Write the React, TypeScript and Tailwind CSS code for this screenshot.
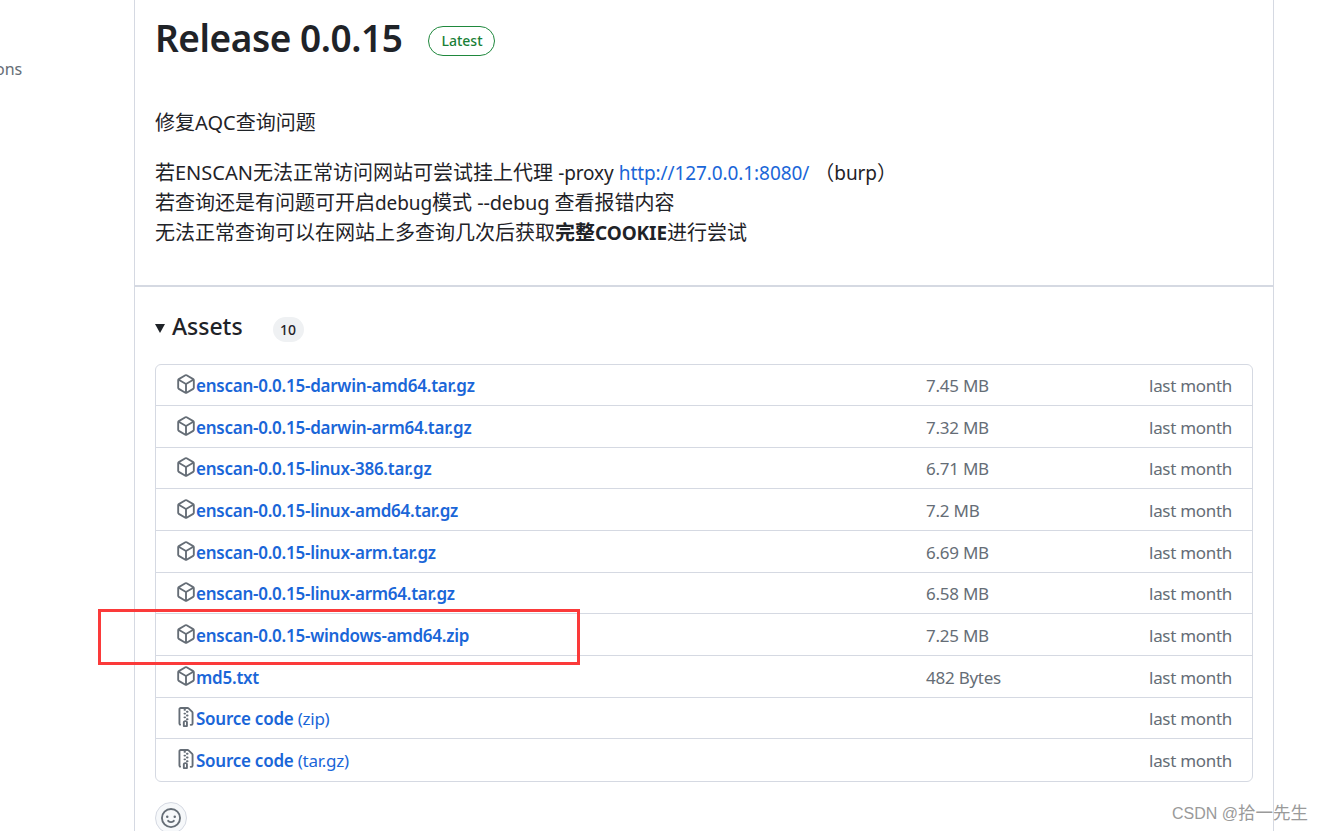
const pkg = "m8.878.392 5.25 3.045c.54.314.872.89.872 1.514v6.098a1.75 1.75 0 0 1-.872 1.514l-5.25 3.045a1.75 1.75 0 0 1-1.756 0l-5.25-3.045A1.75 1.75 0 0 1 1 11.049V4.951c0-.624.332-1.201.872-1.514L7.122.392a1.75 1.75 0 0 1 1.756 0ZM7.875 1.69l-4.63 2.685L8 7.133l4.755-2.758-4.63-2.685a.248.248 0 0 0-.25 0ZM2.5 5.677v5.372c0 .09.047.171.125.216l4.625 2.683V8.432Zm6.25 8.271 4.625-2.683a.25.25 0 0 0 .125-.216V5.677L8.75 8.432Z";
const zip = "M3.5 1.75v11.5c0 .09.048.173.126.217a.75.75 0 0 1-.752 1.298A1.748 1.748 0 0 1 2 13.25V1.75C2 .784 2.784 0 3.75 0h5.586c.464 0 .909.185 1.237.513l2.914 2.914c.329.328.513.773.513 1.237v8.586A1.75 1.75 0 0 1 12.25 15h-.5a.75.75 0 0 1 0-1.5h.5a.25.25 0 0 0 .25-.25V4.664a.25.25 0 0 0-.073-.177L9.513 1.573a.25.25 0 0 0-.177-.073H7.25a.75.75 0 0 1 0 1.5h-.5a.75.75 0 0 1 0-1.5h-3a.25.25 0 0 0-.25.25Zm3.75 8.75h.5c.966 0 1.75.784 1.75 1.75v3a.75.75 0 0 1-.75.75h-2.5a.75.75 0 0 1-.75-.75v-3c0-.966.784-1.75 1.75-1.75ZM6 5.25a.75.75 0 0 1 .75-.75h.5a.75.75 0 0 1 0 1.5h-.5A.75.75 0 0 1 6 5.25Zm.75 2.25h.5a.75.75 0 0 1 0 1.5h-.5a.75.75 0 0 1 0-1.5ZM8 6.75A.75.75 0 0 1 8.75 6h.5a.75.75 0 0 1 0 1.5h-.5A.75.75 0 0 1 8 6.75ZM8.75 3h.5a.75.75 0 0 1 0 1.5h-.5a.75.75 0 0 1 0-1.5ZM8 9.75A.75.75 0 0 1 8.75 9h.5a.75.75 0 0 1 0 1.5h-.5A.75.75 0 0 1 8 9.75Zm-1 2.5v2.25h1v-2.25a.25.25 0 0 0-.25-.25h-.5a.25.25 0 0 0-.25.25Z";
const smiley = "M8 0a8 8 0 1 1 0 16A8 8 0 0 1 8 0ZM1.5 8a6.5 6.5 0 1 0 13 0 6.5 6.5 0 0 0-13 0Zm3.82 1.636a.75.75 0 0 1 1.038.175l.007.009c.103.118.22.222.35.31.264.178.683.37 1.285.37.602 0 1.02-.192 1.285-.371.13-.088.247-.192.35-.31l.007-.008a.75.75 0 0 1 1.222.87l-.022-.015c.02.013.021.015.021.015v.001l-.001.002-.002.003-.005.007-.014.019a2.066 2.066 0 0 1-.184.213c-.16.166-.338.316-.53.445-.63.418-1.37.638-2.127.629-.946 0-1.652-.308-2.126-.63a3.331 3.331 0 0 1-.715-.657l-.014-.02-.005-.006-.002-.003v-.002h-.001l.613-.432-.614.43a.75.75 0 0 1 .183-1.044ZM12 7a1 1 0 1 1-2 0 1 1 0 0 1 2 0ZM5 8a1 1 0 1 1 0-2 1 1 0 0 1 0 2Z";

function Icon({ d }: { d: string }) {
  return (
    <svg viewBox="0 0 16 16" width="20" height="20" fill="currentColor" aria-hidden="true">
      <path d={d} />
    </svg>
  );
}

const rows = [
  ["enscan-0.0.15-darwin-amd64.tar.gz", "7.45 MB", "h-[41px]"],
  ["enscan-0.0.15-darwin-arm64.tar.gz", "7.32 MB", "h-[42px]"],
  ["enscan-0.0.15-linux-386.tar.gz", "6.71 MB", "h-[41px]"],
  ["enscan-0.0.15-linux-amd64.tar.gz", "7.2 MB", "h-[42px]"],
  ["enscan-0.0.15-linux-arm.tar.gz", "6.69 MB", "h-[42px]"],
  ["enscan-0.0.15-linux-arm64.tar.gz", "6.58 MB", "h-[41px]"],
  ["enscan-0.0.15-windows-amd64.zip", "7.25 MB", "h-[42px]"],
  ["md5.txt", "482 Bytes", "h-[42px]"],
];

function Row({ h, icon, name, suffix, size, last }: { h: string; icon: string; name: string; suffix?: string; size?: string; last?: boolean }) {
  return (
    <div className={`flex items-center px-5 text-[17px] tracking-[-0.25px] ${h} ${last ? "" : "border-b border-[#d5d9e2]"}`}>
      <span className="flex w-5 shrink-0 -translate-y-px text-[#656d76]">
        <Icon d={icon} />
      </span>
      <span className="flex-1 translate-y-px whitespace-nowrap text-[#1a66d8]">
        <span className="font-semibold">{name}</span>
        {suffix ? <span> {suffix}</span> : null}
      </span>
      <span className="w-[223px] translate-y-px text-[#656d76]">{size}</span>
      <span className="translate-y-px tracking-[-0.3px] text-[#656d76]">last month</span>
    </div>
  );
}

const L = ({ children }: { children: React.ReactNode }) => <span className="text-[19px] tracking-[-0.1px]">{children}</span>;

export default function App() {
  return (
    <div className="relative flex h-[831px] w-[1324px] overflow-hidden bg-white text-[20px] text-[#1f2328] [font-family:'Noto_Sans','Noto_Sans_CJK_SC',sans-serif]">
      <aside className="w-[134px] shrink-0 overflow-hidden pt-[57px] text-[16px] leading-6 text-[#656d76]">
        <span className="-ml-[5px] block">ons</span>
      </aside>
      <main className="w-[1140px] shrink-0 border-x border-[#d5d9e2]">
        <header className="flex h-[64px] items-center px-5 pt-[12px]">
          <h1 className="text-[37px] leading-[52px] font-semibold tracking-[-0.45px]">Release 0.0.15</h1>
          <span className="mt-[5px] ml-[26px] flex h-[30px] w-[67px] items-center justify-center rounded-full border border-[#1f883d] text-[14px] font-medium text-[#1a7f37]">Latest</span>
        </header>
        <section className="h-[223px] border-b-2 border-[#d5d9e2] px-5 pt-[44px] leading-[30px]">
          <p>修复<span>AQC</span>查询问题</p>
          <p className="mt-5">
            若<span>ENSCAN</span>无法正常访问网站可尝试挂上代理 <L>-proxy</L> <L><span className="text-[#1a66d8]">http://127.0.0.1:8080/</span></L> （<L>burp</L>）
            <br />若查询还是有问题可开启<L>debug</L>模式 <span className="tracking-[-0.2px]">--debug</span> 查看报错内容
            <br />无法正常查询可以在网站上多查询几次后获取<strong className="font-bold">完整<L>COOKIE</L></strong>进行尝试
          </p>
        </section>
        <section className="px-5 pt-[21px]">
          <div className="flex h-[40px] items-center">
            <span className="mr-[7px] h-0 w-0 border-x-[5px] border-t-[9px] border-x-transparent border-t-[#1f2328]" />
            <h2 className="mb-[4px] text-[23px] font-medium">Assets</h2>
            <span className="mt-[2px] ml-[30px] flex h-[25px] w-[31px] items-center justify-center rounded-full bg-[#eff1f3] text-[14px] font-medium">10</span>
          </div>
          <div className="mt-4 rounded-md border border-[#d5d9e2]">
            {rows.map(([n, s, h]) => (
              <Row key={n} h={h} icon={pkg} name={n} size={s} />
            ))}
            <Row h="h-[41px]" icon={zip} name="Source code" suffix="(zip)" />
            <Row h="h-[42px]" icon={zip} name="Source code" suffix="(tar.gz)" last />
          </div>
          <button className="mt-[20px] flex h-8 w-8 items-center justify-center rounded-full border border-[#d5d9e2] bg-[#f6f8fa] text-[#656d76]">
            <Icon d={smiley} />
          </button>
        </section>
      </main>
      <div className="absolute top-[609px] left-[98px] h-[56px] w-[482px] border-[3px] border-[#fb3a3a]" />
      <div className="absolute top-[801px] left-[1172px] whitespace-nowrap text-[16px] leading-6 text-[#9a9a9a] [font-family:'Liberation_Sans','Noto_Sans_CJK_SC',sans-serif]">
        CSDN @<span className="text-[17.5px]">拾一先生</span>
      </div>
    </div>
  );
}
